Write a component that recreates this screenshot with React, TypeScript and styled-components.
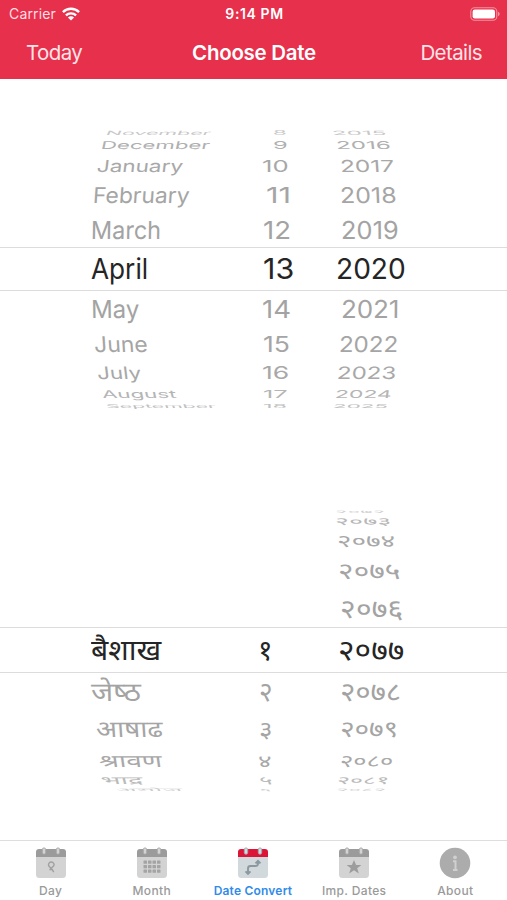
import React, { useLayoutEffect, useRef, useState } from 'react';
import styled, { createGlobalStyle } from 'styled-components';

const GlobalStyle = createGlobalStyle`
  * { box-sizing: border-box; }
  body { margin: 0; background: #fff; font-family: Inter, "Noto Sans", sans-serif; }
`;

const Screen = styled.div`
  width: 507px;
  height: 900px;
  display: flex;
  flex-direction: column;
  background: #fff;
  overflow: hidden;
`;

const Header = styled.header`
  height: 79px;
  flex: none;
  background: #e6304c;
  color: #fff;
`;

const StatusBar = styled.div`
  height: 27px;
  display: grid;
  grid-template-columns: 1fr auto 1fr;
  align-items: center;
  padding: 0 7px 0 9px;
  font-size: 14px;
`;

const Carrier = styled.div`
  display: flex;
  align-items: center;
  gap: 6px;
  color: #ffdfe4;
  letter-spacing: 0.15px;
`;

const StatusTime = styled.span`
  font-size: 14px;
  font-weight: 600;
  letter-spacing: 0.6px;
`;

const Battery = styled.svg`
  justify-self: end;
`;

const NavBar = styled.nav`
  height: 52px;
  display: grid;
  grid-template-columns: 1fr auto 1fr;
  align-items: center;
  padding: 0 25px 0 26px;
`;

const NavButton = styled.button<{ $end?: boolean }>`
  border: 0;
  padding: 0;
  background: none;
  color: #ffe3e7;
  font: 400 20.5px Inter, sans-serif;
  letter-spacing: -0.6px;
  line-height: 52px;
  justify-self: ${(p) => (p.$end ? 'end' : 'start')};
`;

const NavTitle = styled.h1`
  margin: 0;
  font-size: 20.5px;
  font-weight: 600;
  letter-spacing: -0.28px;
  line-height: 52px;
`;

const Picker = styled.section<{ $top: number }>`
  margin-top: ${(p) => p.$top}px;
  flex: none;
`;

const WheelRow = styled.div<{ $height: number; $selected: boolean; $ink: string }>`
  height: ${(p) => p.$height}px;
  display: grid;
  grid-template-columns: 160px 80px 120px;
  padding-left: 80px;
  align-items: center;
  color: ${(p) => p.$ink};
  box-shadow: ${(p) => (p.$selected ? '0 -1px #dcdcdc, 0 1px #dcdcdc' : 'none')};
`;

const Cell = styled.div<{ $indent: number; $width: number; $lift: number }>`
  height: 0;
  display: flex;
  align-items: center;
  margin-left: ${(p) => p.$indent}px;
  margin-top: ${(p) => p.$lift}px;
  width: ${(p) => p.$width}px;
`;

const Label = styled.span<{ $size: number }>`
  flex: none;
  white-space: nowrap;
  font-size: ${(p) => p.$size}px;
  line-height: 1.2;
  transform-origin: 0 50%;
`;

const TabBar = styled.footer`
  margin-top: auto;
  height: 60px;
  flex: none;
  display: grid;
  grid-template-columns: repeat(5, 101.2px);
  border-top: 1px solid #dedede;
`;

const Tab = styled.div<{ $active?: boolean }>`
  display: flex;
  flex-direction: column;
  align-items: center;
  padding-top: 6px;
  font-size: 12px;
  line-height: 16px;
  gap: 4px;
  letter-spacing: ${(p) => (p.$active ? 0.2 : 0.35)}px;
  white-space: nowrap;
  font-weight: ${(p) => (p.$active ? 600 : 500)};
  color: ${(p) => (p.$active ? '#318bea' : '#9a9a9a')};
`;

type Item = [text: string, x: number, width: number] | null;
interface RowData {
  h: number;
  scale: number;
  skew: number;
  ink: string;
  items: [Item, Item, Item];
}

const COLUMN_START = [80, 240, 320];

interface WheelTextProps {
  item: Item;
  column: number;
  row: RowData;
  size: number;
  lift: number;
}

function WheelText({ item, column, row, size, lift }: WheelTextProps) {
  const ref = useRef<HTMLSpanElement>(null);
  const [stretch, setStretch] = useState(1);
  const width = item ? item[2] : 0;
  useLayoutEffect(() => {
    if (ref.current && width) setStretch(width / ref.current.offsetWidth);
  }, [width]);
  if (!item) return <span />;
  const lean = column === 0 ? -row.skew : column === 2 ? row.skew * 0.6 : 0;
  return (
    <Cell $indent={item[1] - COLUMN_START[column]} $width={width} $lift={lift}>
      <Label ref={ref} $size={size} style={{ transform: `skewX(${lean}deg) scale(${stretch}, ${row.scale})` }}>
        {item[0]}
      </Label>
    </Cell>
  );
}

function Wheel({ rows, top, size, lift }: { rows: RowData[]; top: number; size: number; lift: number }) {
  return (
    <Picker $top={top}>
      {rows.map((row, i) => (
        <WheelRow key={i} $height={row.h} $selected={row.scale === 1} $ink={row.ink}>
          {row.items.map((item, c) => (
            <WheelText key={c} item={item} column={c} row={row} size={size} lift={lift} />
          ))}
        </WheelRow>
      ))}
    </Picker>
  );
}

const english: RowData[] = [
  { h: 8, scale: 0.2, skew: 26, ink: '#c8c8c8', items: [['November', 106, 105], ['8', 273, 14], ['2015', 332, 54]] },
  { h: 16, scale: 0.38, skew: 12, ink: '#b0b0b0', items: [['December', 101, 109], ['9', 273, 15], ['2016', 336, 55]] },
  { h: 25, scale: 0.58, skew: 7, ink: '#a8a8a8', items: [['January', 97, 86], ['10', 262, 27], ['2017', 340, 54]] },
  { h: 34, scale: 0.76, skew: 4, ink: '#a5a5a5', items: [['February', 93, 97], ['11', 266, 25], ['2018', 340, 57]] },
  { h: 36, scale: 0.87, skew: 1, ink: '#a3a3a3', items: [['March', 91, 70], ['12', 263, 28], ['2019', 341, 58]] },
  { h: 42, scale: 1, skew: 0, ink: '#252525', items: [['April', 91, 57], ['13', 263, 31], ['2020', 336, 70]] },
  { h: 37, scale: 0.87, skew: -1, ink: '#a3a3a3', items: [['May', 91, 48], ['14', 262, 29], ['2021', 341, 58]] },
  { h: 33, scale: 0.76, skew: -4, ink: '#a5a5a5', items: [['June', 94, 54], ['15', 263, 27], ['2022', 339, 59]] },
  { h: 26, scale: 0.6, skew: -7, ink: '#a8a8a8', items: [['July', 97, 44], ['16', 262, 27], ['2023', 337, 59]] },
  { h: 16, scale: 0.38, skew: -12, ink: '#b5b5b5', items: [['August', 102, 74], ['17', 263, 25], ['2024', 335, 57]] },
  { h: 7, scale: 0.18, skew: -22, ink: '#c0c0c0', items: [['September', 106, 110], ['18', 263, 24], ['2025', 333, 55]] },
];

const nepali: RowData[] = [
  { h: 6, scale: 0.13, skew: 26, ink: '#cccccc', items: [null, null, ['२०७२', 335, 50]] },
  { h: 13, scale: 0.38, skew: 14, ink: '#b8b8b8', items: [null, null, ['२०७३', 335, 56]] },
  { h: 26, scale: 0.62, skew: 8, ink: '#a8a8a8', items: [null, null, ['२०७४', 337, 58]] },
  { h: 36, scale: 0.82, skew: 4, ink: '#a5a5a5', items: [null, null, ['२०७५', 338, 62]] },
  { h: 39, scale: 0.94, skew: 1, ink: '#a3a3a3', items: [null, null, ['२०७६', 340, 63]] },
  { h: 44, scale: 1, skew: 0, ink: '#252525', items: [['बैशाख', 91, 70], ['१', 258, 15], ['२०७७', 338, 66]] },
  { h: 39, scale: 0.94, skew: -1, ink: '#a3a3a3', items: [['जेष्‍ठ', 91, 50], ['२', 259, 14], ['२०७८', 340, 61]] },
  { h: 36, scale: 0.82, skew: -4, ink: '#a5a5a5', items: [['आषाढ', 96, 67], ['३', 259, 14], ['२०७९', 340, 58]] },
  { h: 26, scale: 0.62, skew: -8, ink: '#a8a8a8', items: [['श्रावण', 99, 63], ['४', 258, 14], ['२०८०', 340, 53]] },
  { h: 13, scale: 0.38, skew: -14, ink: '#bababa', items: [['भाद्र', 101, 42], ['५', 259, 14], ['२०८१', 337, 52]] },
  { h: 6, scale: 0.13, skew: -26, ink: '#cccccc', items: [['असोज', 116, 66], ['६', 259, 13], ['२०८२', 336, 50]] },
];

interface CalendarProps {
  top: string;
  body: string;
  ink: string;
  children: React.ReactNode;
}

function CalendarIcon({ top, body, ink, children }: CalendarProps) {
  return (
    <svg width="30" height="32" viewBox="0 0 30 32">
      <path d="M0 9h30v18.500a3.500 3.500 0 0 1-3.500 3.500h-23A3.500 3.500 0 0 1 0 27.500z" fill={body} />
      <path d="M0 10V5a3 3 0 0 1 3-3h24a3 3 0 0 1 3 3v5z" fill={top} />
      <rect x="6.300" y=".9" width="3.400" height="6.400" rx="1.700" fill={body} stroke={ink} strokeWidth=".9" />
      <rect x="20.300" y=".9" width="3.400" height="6.400" rx="1.700" fill={body} stroke={ink} strokeWidth=".9" />
      {children}
    </svg>
  );
}

const GRAY = { top: '#9b9b9b', body: '#d3d3d3', ink: '#a5a5a5' };

export default function App() {
  return (
    <Screen>
      <GlobalStyle />
      <Header>
        <StatusBar>
          <Carrier>
            Carrier
            <svg width="18" height="14" viewBox="0 0 18 14" fill="none" stroke="#fff" strokeWidth="2.300">
              <path d="M.9 5.100a11.500 11.500 0 0 1 16.200 0" />
              <path d="M3.900 8.400a7.300 7.300 0 0 1 10.200 0" />
              <path d="M9 13.600 5.900 10.500a4.400 4.400 0 0 1 6.200 0z" fill="#fff" stroke="none" />
            </svg>
          </Carrier>
          <StatusTime>9:14 PM</StatusTime>
          <Battery width="30" height="14" viewBox="0 0 30 14">
            <rect x=".8" y=".8" width="26" height="12.400" rx="3.800" fill="none" stroke="#f3929f" strokeWidth="1.100" />
            <rect x="2.600" y="2.600" width="22.400" height="8.800" rx="2.200" fill="#fff" />
            <path d="M28 4.800q1.700.6 1.700 2.200T28 9.200z" fill="#f3929f" />
          </Battery>
        </StatusBar>
        <NavBar>
          <NavButton>Today</NavButton>
          <NavTitle>Choose Date</NavTitle>
          <NavButton $end>Details</NavButton>
        </NavBar>
      </Header>

      <Wheel rows={english} top={50} size={28.5} lift={1} />
      <Wheel rows={nepali} top={99} size={28} lift={2} />

      <TabBar>
        <Tab>
          <CalendarIcon {...GRAY}>
            <path d="M16.500 20.300a2.800 2.800 0 1 1 1.600-2.500c0 2.600-4.100 2.800-4.100 4.700h2.200l1.500 2.700" fill="none" stroke="#a0a0a0" strokeWidth="1.400" />
          </CalendarIcon>
          Day
        </Tab>
        <Tab>
          <CalendarIcon {...GRAY}>
            {[13.5, 18, 22.5].map((y) =>
              [6.5, 11, 15.5, 20].map((x) => (
                <rect key={`${x}-${y}`} x={x} y={y} width="3.500" height="3.300" rx=".6" fill="#a4a4a4" />
              )),
            )}
          </CalendarIcon>
          Month
        </Tab>
        <Tab $active>
          <CalendarIcon top="#dc1438" body="#d2d9dd" ink="#a2a4a9">
            <path
              d="M10 26.500V21.500q0-2.500 2.500-2.500h5q2.500 0 2.500-2.500V14M17.500 16.300l2.500-2.500 2.500 2.500M7.500 24.300 10 26.800l2.500-2.500"
              fill="none"
              stroke="#8b989e"
              strokeWidth="1.900"
            />
          </CalendarIcon>
          Date Convert
        </Tab>
        <Tab>
          <CalendarIcon {...GRAY}>
            <path d="m15 13 2.100 5h5.300l-4.200 3.300 1.600 5.200-4.800-3.200-4.800 3.200 1.600-5.200L7.600 18h5.300z" fill="#9d9d9d" />
          </CalendarIcon>
          Imp. Dates
        </Tab>
        <Tab>
          <svg width="32" height="32" viewBox="0 0 32 32">
            <circle cx="16" cy="16" r="15.300" fill="#acacac" />
            <circle cx="16" cy="10.300" r="1.900" fill="#d0d0d0" />
            <path d="M14 14.300h2.500V23M14 23h4.500" fill="none" stroke="#d0d0d0" strokeWidth="2" />
          </svg>
          About
        </Tab>
      </TabBar>
    </Screen>
  );
}
